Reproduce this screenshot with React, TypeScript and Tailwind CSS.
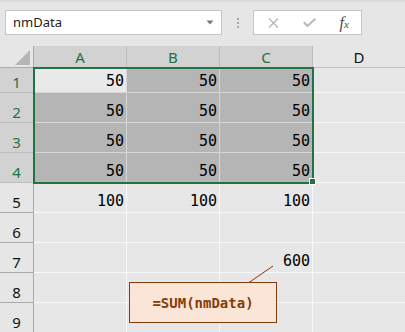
import React from "react";

type Cell = { v?: string; sel?: boolean; active?: boolean };

const rows: { n: number; cells: Cell[] }[] = [
  { n: 1, cells: [{ v: "50", sel: true, active: true }, { v: "50", sel: true }, { v: "50", sel: true }, {}] },
  { n: 2, cells: [{ v: "50", sel: true }, { v: "50", sel: true }, { v: "50", sel: true }, {}] },
  { n: 3, cells: [{ v: "50", sel: true }, { v: "50", sel: true }, { v: "50", sel: true }, {}] },
  { n: 4, cells: [{ v: "50", sel: true }, { v: "50", sel: true }, { v: "50", sel: true }, {}] },
  { n: 5, cells: [{ v: "100" }, { v: "100" }, { v: "100" }, {}] },
  { n: 6, cells: [{}, {}, {}, {}] },
  { n: 7, cells: [{}, {}, { v: "600" }, {}] },
  { n: 8, cells: [{}, {}, {}, {}] },
  { n: 9, cells: [{}, {}, {}, {}] },
];

const cols = ["A", "B", "C", "D"];

export default function App() {
  return (
    <div
      className="relative w-[405px] h-[332px] overflow-hidden bg-[#e6e6e6]"
      style={{ fontFamily: "'Noto Sans', 'Open Sans', sans-serif" }}
    >
      {/* Top bar */}
      <div className="h-[46px] flex items-start pt-[10px] pl-[5px] border-t-2 border-[#dadada]">
        <div className="w-[217px] h-[25px] -mt-[2px] bg-white border border-[#c6c6c6] flex items-center pl-[7px] pr-[7px]">
          <span className="text-[13px] text-[#222] leading-none flex-1">nmData</span>
          <svg width="8" height="5" viewBox="0 0 8 5">
            <path d="M0.5 0.5 L7.5 0.5 L4 4.5 Z" fill="#7a7a7a" />
          </svg>
        </div>
        <div className="w-[31px] h-[25px] -mt-[2px] flex flex-col items-center justify-center gap-[2px]">
          <span className="block w-[2px] h-[2px] bg-[#a8a8a8]" />
          <span className="block w-[2px] h-[2px] bg-[#a8a8a8]" />
          <span className="block w-[2px] h-[2px] bg-[#a8a8a8]" />
        </div>
        <div className="w-[109px] h-[25px] -mt-[2px] bg-white border border-[#c6c6c6] flex items-center">
          <div className="w-[36px] flex justify-center pl-[4px]">
            <svg width="11" height="10" viewBox="0 0 11 10">
              <path d="M1 0.5 L10 9.5 M10 0.5 L1 9.5" stroke="#b8b8b8" strokeWidth="1.4" />
            </svg>
          </div>
          <div className="w-[36px] flex justify-center pl-[4px]">
            <svg width="13" height="9" viewBox="0 0 13 9">
              <path d="M0.8 4.2 L4.5 8 L12.3 0.7" stroke="#b8b8b8" strokeWidth="2" fill="none" />
            </svg>
          </div>
          <div className="w-[36px] flex justify-center pl-[2px]">
            <span
              className="italic text-[16px] leading-none text-[#4a4a4a]"
              style={{ fontFamily: "'Liberation Serif', 'DejaVu Serif', serif" }}
            >
              f<span className="text-[11px]">x</span>
            </span>
          </div>
        </div>
      </div>

      {/* Grid */}
      <div className="grid grid-cols-[34px_93px_93px_93px_93px] grid-rows-[22px_25px_repeat(8,30px)]">
        {/* corner */}
        <div className="relative bg-[#e6e6e6] border-r border-b border-[#ababab]">
          <svg className="absolute left-[15px] top-[4px]" width="15" height="15" viewBox="0 0 15 15">
            <path d="M15 0 L15 15 L0 15 Z" fill="#b6b6b6" />
          </svg>
        </div>
        {cols.map((c, i) => (
          <div
            key={c}
            className={
              i < 3
                ? "bg-[#d2d2d2] border-r border-b border-[#bdbdbd] flex items-center justify-center text-[15px] text-[#217346]"
                : "bg-[#e6e6e6] border-r border-b border-[#bdbdbd] flex items-center justify-center text-[15px] text-[#111]"
            }
          >
            <span className="leading-none pt-[2px]">{c}</span>
          </div>
        ))}

        {rows.map((r) => (
          <React.Fragment key={r.n}>
            <div
              className={
                r.n <= 4
                  ? "bg-[#d2d2d2] border-r border-b border-[#bdbdbd] flex items-end justify-center pb-[3px] text-[15px] leading-[14px] text-[#217346]"
                  : "bg-[#e6e6e6] border-r border-b border-[#a9a9a9] flex items-end justify-center pb-[3px] text-[15px] leading-[14px] text-[#111]"
              }
            >
              {r.n}
            </div>
            {r.cells.map((cell, ci) => (
              <div
                key={ci}
                className={
                  cell.active
                    ? "bg-[#e9e9e9] border-r border-b border-[#d6d6d6] flex items-end justify-end pr-[2px] pb-[3px]"
                    : cell.sel
                    ? "bg-[#b5b5b5] border-r border-b border-[#d6d6d6] flex items-end justify-end pr-[2px] pb-[3px]"
                    : "bg-[#e7e7e7] border-r border-b border-[#f8f8f8] flex items-end justify-end pr-[2px] pb-[3px]"
                }
              >
                {cell.v && (
                  <span
                    className="text-[15px] leading-[15px] text-black"
                    style={{ fontFamily: "'DejaVu Sans Mono', 'Liberation Mono', monospace" }}
                  >
                    {cell.v}
                  </span>
                )}
              </div>
            ))}
          </React.Fragment>
        ))}
      </div>

      {/* Selection border */}
      <div className="absolute left-[33px] top-[67px] w-[281px] h-[117px] border-2 border-[#217346] pointer-events-none" />
      {/* Fill handle */}
      <div className="absolute left-[309px] top-[178px] w-[7px] h-[7px] bg-[#217346] border border-white" />

      {/* Callout leader line */}
      <svg className="absolute left-0 top-0 pointer-events-none" width="405" height="332">
        <line x1="249" y1="282.5" x2="273" y2="266" stroke="#843c0c" strokeWidth="1" />
      </svg>

      {/* Callout box */}
      <div className="absolute left-[129px] top-[282px] w-[148px] h-[41px] bg-[#fbe5d6] border border-[#843c0c] flex items-center justify-center">
        <span
          className="text-[14px] font-bold text-[#843c0c] leading-none"
          style={{ fontFamily: "'DejaVu Sans Mono', 'Liberation Mono', monospace" }}
        >
          =SUM(nmData)
        </span>
      </div>
    </div>
  );
}
